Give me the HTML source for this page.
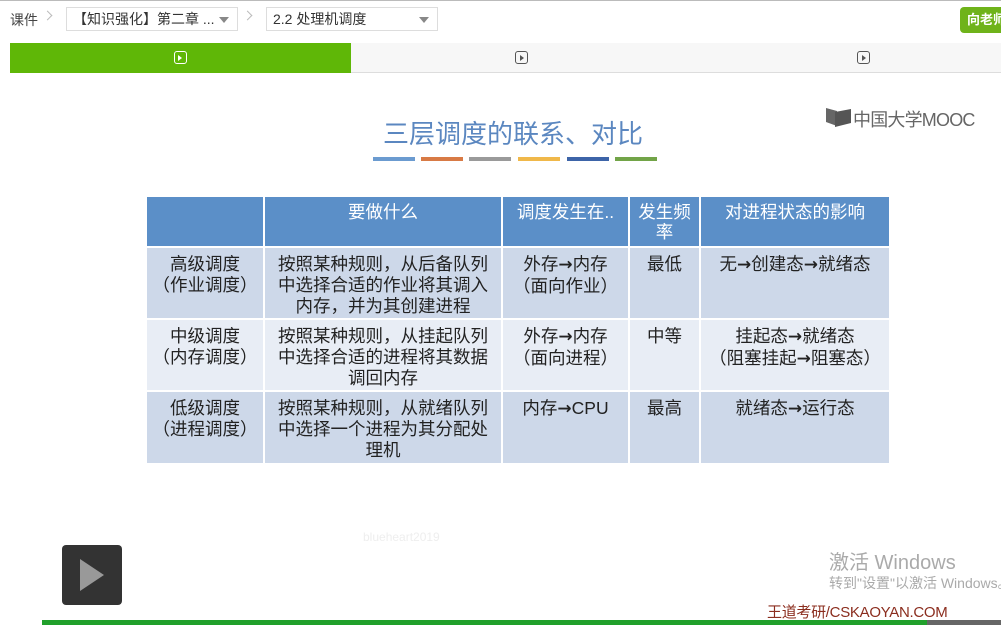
<!DOCTYPE html>
<html><head><meta charset="utf-8"><style>
*{margin:0;padding:0;box-sizing:border-box}
body{width:1001px;height:625px;overflow:hidden;background:#fff;position:relative;font-family:"Liberation Sans","Noto Sans CJK SC",sans-serif}
.a{position:absolute}
.sel{position:absolute;top:7px;height:24px;border:1px solid #ddd;background:#fff;font-size:14px;color:#333;line-height:22px;padding-left:6px}
.tri{position:absolute;right:8px;top:9px;border-left:5px solid transparent;border-right:5px solid transparent;border-top:6px solid #888}
.chev{position:absolute;top:12px;width:7px;height:7px;border-right:1.5px solid #bbb;border-top:1.5px solid #bbb;transform:rotate(45deg)}
.pi{position:absolute;top:51px;width:13px;height:13px;border:1.3px solid #555;border-radius:3px}
.pi:after{content:"";position:absolute;left:3.5px;top:2.5px;border-top:3px solid transparent;border-bottom:3px solid transparent;border-left:4px solid #555}
.c{position:absolute;text-align:center;font-size:17.5px;line-height:21px;color:#222;padding-top:6px;white-space:nowrap}
.h{color:#fff;padding-top:5px}
b{font-family:"DejaVu Sans",sans-serif;font-weight:bold;font-size:17px}
</style></head><body>
<div class="a" style="left:0;top:0;width:1001px;height:1px;background:#bbb"></div>
<div class="a" style="left:10px;top:10px;font-size:14px;color:#444">课件</div>
<div class="chev" style="left:44px"></div>
<div class="sel" style="left:66px;width:172px">【知识强化】第二章 ...<div class="tri"></div></div>
<div class="chev" style="left:244px"></div>
<div class="sel" style="left:266px;width:172px">2.2 处理机调度<div class="tri"></div></div>
<div class="a" style="left:960px;top:7px;width:50px;height:26px;background:#6fb31a;border-radius:4px;color:#fff;font-size:13px;line-height:26px;padding-left:7px;font-weight:bold">向老师</div>
<div class="a" style="left:10px;top:43px;width:991px;height:30px;background:#f7f7f7;border-bottom:1px solid #ddd"></div>
<div class="a" style="left:10px;top:43px;width:341px;height:30px;background:#5fb707"></div>
<div class="a" style="left:174px;top:51px;width:13px;height:13px;border:1.3px solid #fff;border-radius:3px"></div>
<div class="a" style="left:178px;top:54.5px;border-top:3px solid transparent;border-bottom:3px solid transparent;border-left:4px solid #fff"></div>
<div class="pi" style="left:515px"></div>
<div class="pi" style="left:857px"></div>

<div class="a" style="left:383px;top:114px;font-size:26px;color:#5b87c0">三层调度的联系、对比</div>
<div class="a" style="left:373px;top:157px;width:42px;height:4px;background:#6b9bd0"></div>
<div class="a" style="left:421px;top:157px;width:42px;height:4px;background:#d87a45"></div>
<div class="a" style="left:469px;top:157px;width:42px;height:4px;background:#9a9a9a"></div>
<div class="a" style="left:518px;top:157px;width:42px;height:4px;background:#f0b84a"></div>
<div class="a" style="left:567px;top:157px;width:42px;height:4px;background:#3d64a8"></div>
<div class="a" style="left:615px;top:157px;width:42px;height:4px;background:#72a448"></div>

<svg class="a" style="left:825px;top:106px" width="28" height="22"><path d="M1 2 L12 5 L12 20 L1 16Z" fill="#666"/><path d="M10 6 L26 3 L26 17 L10 21Z" fill="#555"/></svg>
<div class="a" style="left:853px;top:106px;font-size:18px;color:#666;letter-spacing:-0.8px">中国大学MOOC</div>

<div class="a" style="left:147px;top:197px;width:742px;height:266px;background:#fff"></div>
<div class="a" style="left:147px;top:197px;width:742px;height:49px;background:#5b8fc8"></div>
<div class="a" style="left:147px;top:248px;width:742px;height:70px;background:#cdd8e9"></div>
<div class="a" style="left:147px;top:320px;width:742px;height:70px;background:#e8edf5"></div>
<div class="a" style="left:147px;top:392px;width:742px;height:71px;background:#cdd8e9"></div>
<div class="a" style="left:263px;top:197px;width:2px;height:266px;background:#fff"></div>
<div class="a" style="left:501px;top:197px;width:2px;height:266px;background:#fff"></div>
<div class="a" style="left:628px;top:197px;width:2px;height:266px;background:#fff"></div>
<div class="a" style="left:699px;top:197px;width:2px;height:266px;background:#fff"></div>

<div class="c h" style="left:265px;top:197px;width:236px">要做什么</div>
<div class="c h" style="left:503px;top:197px;width:125px">调度发生在..</div>
<div class="c h" style="left:630px;top:197px;width:69px;line-height:20px">发生频<br>率</div>
<div class="c h" style="left:701px;top:197px;width:188px">对进程状态的影响</div>

<div class="c" style="left:147px;top:248px;width:116px">高级调度<br>（作业调度）</div>
<div class="c" style="left:265px;top:248px;width:236px">按照某种规则，从后备队列<br>中选择合适的作业将其调入<br>内存，并为其创建进程</div>
<div class="c" style="left:503px;top:248px;width:125px">外存<b>→</b>内存<br>（面向作业）</div>
<div class="c" style="left:630px;top:248px;width:69px">最低</div>
<div class="c" style="left:701px;top:248px;width:188px">无<b>→</b>创建态<b>→</b>就绪态</div>

<div class="c" style="left:147px;top:320px;width:116px">中级调度<br>（内存调度）</div>
<div class="c" style="left:265px;top:320px;width:236px">按照某种规则，从挂起队列<br>中选择合适的进程将其数据<br>调回内存</div>
<div class="c" style="left:503px;top:320px;width:125px">外存<b>→</b>内存<br>（面向进程）</div>
<div class="c" style="left:630px;top:320px;width:69px">中等</div>
<div class="c" style="left:701px;top:320px;width:188px">挂起态<b>→</b>就绪态<br>（阻塞挂起<b>→</b>阻塞态）</div>

<div class="c" style="left:147px;top:392px;width:116px">低级调度<br>（进程调度）</div>
<div class="c" style="left:265px;top:392px;width:236px">按照某种规则，从就绪队列<br>中选择一个进程为其分配处<br>理机</div>
<div class="c" style="left:503px;top:392px;width:125px">内存<b>→</b>CPU</div>
<div class="c" style="left:630px;top:392px;width:69px">最高</div>
<div class="c" style="left:701px;top:392px;width:188px">就绪态<b>→</b>运行态</div>

<div class="a" style="left:363px;top:530px;font-size:12px;color:#eee">blueheart2019</div>
<div class="a" style="left:62px;top:545px;width:60px;height:60px;background:#333;border-radius:4px"></div>
<div class="a" style="left:80px;top:559px;border-top:16px solid transparent;border-bottom:16px solid transparent;border-left:24px solid #999"></div>
<div class="a" style="left:829px;top:546px;font-size:20px;color:#aaa">激活 Windows</div>
<div class="a" style="left:829px;top:573px;font-size:14px;color:#aaa;white-space:nowrap">转到"设置"以激活 Windows。</div>
<div class="a" style="left:767px;top:601px;font-size:15px;color:#8b2d1e;letter-spacing:-0.3px">王道考研/CSKAOYAN.COM</div>
<div class="a" style="left:42px;top:620px;width:885px;height:5px;background:#21a02b"></div>
<div class="a" style="left:927px;top:620px;width:74px;height:5px;background:#666"></div>
</body></html>
